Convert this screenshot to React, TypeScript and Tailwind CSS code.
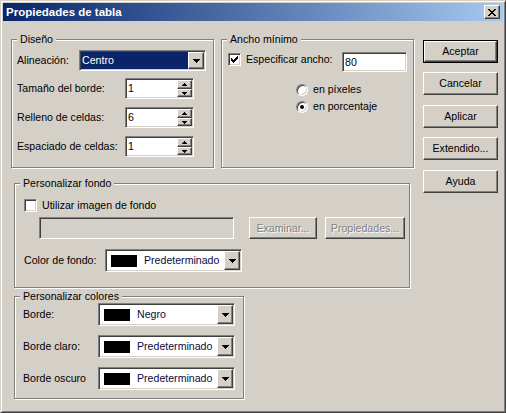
import React from "react";

const sunken =
  "border border-t-[#808080] border-l-[#808080] border-r-white border-b-white shadow-[inset_1px_1px_0_#404040,inset_-1px_-1px_0_#d4d0c8] p-px";
const raised =
  "border border-t-white border-l-white border-r-[#404040] border-b-[#404040] shadow-[inset_-1px_-1px_0_#808080] bg-[#d4d0c8]";

function Rects({ w, h, rows }: { w: number; h: number; rows: number[][] }) {
  return (
    <svg width={w} height={h} viewBox={`0 0 ${w} ${h}`} shapeRendering="crispEdges">
      {rows.map(([x, y, rw], i) => (
        <rect key={i} x={x} y={y} width={rw} height={1} fill="#000" />
      ))}
    </svg>
  );
}

const comboArrow = [
  [0, 0, 7],
  [1, 1, 5],
  [2, 2, 3],
  [3, 3, 1],
];
const spinUp = [
  [2, 0, 1],
  [1, 1, 3],
  [0, 2, 5],
];
const spinDown = [
  [0, 0, 5],
  [1, 1, 3],
  [2, 2, 1],
];
const checkMark = [
  [6, 0, 1],
  [5, 1, 2],
  [0, 2, 1],
  [4, 2, 3],
  [0, 3, 2],
  [3, 3, 3],
  [0, 4, 5],
  [1, 5, 3],
  [2, 6, 1],
];
const closeX = [
  [0, 0, 2], [6, 0, 2],
  [1, 1, 2], [5, 1, 2],
  [2, 2, 4],
  [3, 3, 2],
  [2, 4, 4],
  [1, 5, 2], [5, 5, 2],
  [0, 6, 2], [6, 6, 2],
];

function Group({
  title,
  className,
  children,
}: {
  title: string;
  className: string;
  children: React.ReactNode;
}) {
  return (
    <div
      className={`relative border border-[#808080] shadow-[inset_1px_1px_0_#fff,1px_1px_0_#fff] ${className}`}
    >
      <span className="absolute -top-[7px] left-[5px] px-[3px] bg-[#d4d0c8] leading-[13px]">
        {title}
      </span>
      {children}
    </div>
  );
}

function Check({ checked }: { checked?: boolean }) {
  return (
    <div className={`w-[13px] h-[13px] shrink-0 bg-white flex items-center justify-center ${sunken}`}>
      {checked && <Rects w={7} h={7} rows={checkMark} />}
    </div>
  );
}

function Radio({ checked }: { checked?: boolean }) {
  return (
    <div className="w-[12px] h-[12px] shrink-0 rounded-full bg-white border border-t-[#808080] border-l-[#808080] border-r-white border-b-white shadow-[inset_1px_1px_0_#404040,inset_-1px_-1px_0_#d4d0c8] flex items-center justify-center">
      {checked && <div className="w-[4px] h-[4px] rounded-full bg-black" />}
    </div>
  );
}

function Btn({
  label,
  w,
  h = 23,
  def,
  disabled,
  className = "",
}: {
  label: string;
  w: number;
  h?: number;
  def?: boolean;
  disabled?: boolean;
  className?: string;
}) {
  const text = disabled ? "text-[#808080] [text-shadow:1px_1px_0_#fff]" : "";
  return (
    <div
      className={`flex shrink-0 ${def ? "border border-black" : ""} ${className}`}
      style={{ width: w, height: h }}
    >
      <div className={`flex-1 flex items-center justify-center ${raised} ${text}`}>{label}</div>
    </div>
  );
}

function ArrowButton() {
  return (
    <div className={`w-[16px] h-full shrink-0 flex items-center justify-center ${raised}`}>
      <Rects w={7} h={4} rows={comboArrow} />
    </div>
  );
}

function Spinner({ value }: { value: string }) {
  return (
    <div className={`w-[69px] h-[21px] bg-white flex ${sunken}`}>
      <div className="flex-1 flex items-center pl-[1px]">{value}</div>
      <div className="w-[15px] flex flex-col">
        <div className={`h-[9px] flex items-center justify-center ${raised}`}>
          <Rects w={5} h={3} rows={spinUp} />
        </div>
        <div className={`h-[8px] flex items-center justify-center ${raised}`}>
          <Rects w={5} h={3} rows={spinDown} />
        </div>
      </div>
    </div>
  );
}

function ColorCombo({ label }: { label: string }) {
  return (
    <div className={`w-[137px] h-[23px] bg-white flex items-center ${sunken}`}>
      <div className="ml-[4px] w-[26px] h-[12px] bg-black shrink-0" />
      <span className="ml-[7px] text-[#0b0b40]">{label}</span>
      <div className="ml-auto h-full">
        <ArrowButton />
      </div>
    </div>
  );
}

export default function App() {
  return (
    <div className="w-[506px] h-[413px] bg-[#d4d0c8] border border-t-[#d4d0c8] border-l-[#d4d0c8] border-r-[#404040] border-b-[#404040] shadow-[inset_1px_1px_0_#fff,inset_-1px_-1px_0_#808080] p-[2px] font-['Liberation_Sans',Arial,sans-serif] text-[10.6px] leading-[13px] text-black">
      {/* title bar */}
      <div className="h-[18px] flex items-center justify-between bg-linear-to-r from-[#0a246a] to-[#a6caf0] pl-[3px] pr-[3px]">
        <span className="text-white font-bold text-[11.5px]">Propiedades de tabla</span>
        <div className={`w-[16px] h-[14px] flex items-center justify-center ${raised}`}>
          <Rects w={8} h={7} rows={closeX} />
        </div>
      </div>

      <div className="flex pl-[8px] pt-[18px]">
        <div className="flex flex-col">
          <div className="flex gap-[7px]">
            <Group title="Diseño" className="w-[203px] h-[129px]">
              <div className="flex flex-col pt-[10px] pl-[5px]">
                <div className="flex items-center h-[21px]">
                  <span className="w-[62px]">Alineación:</span>
                  <div className={`w-[127px] h-[21px] bg-white flex ${sunken}`}>
                    <div className="flex-1 flex items-center bg-[#0a246a] text-white pl-[1px]">
                      Centro
                    </div>
                    <ArrowButton />
                  </div>
                </div>
                <div className="flex flex-col gap-[8px] mt-[7px]">
                  {[
                    ["Tamaño del borde:", "1"],
                    ["Relleno de celdas:", "6"],
                    ["Espaciado de celdas:", "1"],
                  ].map(([l, v]) => (
                    <div key={l} className="flex items-center h-[21px]">
                      <span className="w-[108px]">{l}</span>
                      <Spinner value={v} />
                    </div>
                  ))}
                </div>
              </div>
            </Group>

            <Group title="Ancho mínimo" className="w-[193px] h-[129px]">
              <div className="pl-[6px] pt-[12px]">
                <div className="flex items-start">
                  <div className="mt-[1px]">
                    <Check checked />
                  </div>
                  <span className="ml-[5px] w-[96px] mt-[1px]">Especificar ancho:</span>
                  <div className={`w-[65px] h-[20px] bg-white flex items-center pl-[2px] ${sunken}`}>
                    80
                  </div>
                </div>
                <div className="ml-[68px] mt-[11px] flex flex-col gap-[4px]">
                  <div className="flex items-center h-[13px] gap-[5px]">
                    <Radio />
                    <span>en píxeles</span>
                  </div>
                  <div className="flex items-center h-[13px] gap-[5px]">
                    <Radio checked />
                    <span>en porcentaje</span>
                  </div>
                </div>
              </div>
            </Group>
          </div>

          <Group title="Personalizar fondo" className="ml-[3px] mt-[15px] w-[396px] h-[105px]">
            <div className="pl-[9px] pt-[15px]">
              <div className="flex items-center h-[13px] gap-[5px]">
                <Check />
                <span>Utilizar imagen de fondo</span>
              </div>
              <div className="flex mt-[5px]">
                <div className={`ml-[15px] w-[195px] h-[22px] bg-[#d4d0c8] ${sunken}`} />
                <Btn label="Examinar..." w={68} h={22} disabled className="ml-[15px]" />
                <Btn label="Propiedades..." w={80} h={22} disabled className="ml-[8px]" />
              </div>
              <div className="flex items-center mt-[10px]">
                <span className="w-[81px]">Color de fondo:</span>
                <ColorCombo label="Predeterminado" />
              </div>
            </div>
          </Group>

          <Group title="Personalizar colores" className="ml-[3px] mt-[8px] w-[230px] h-[103px]">
            <div className="pl-[8px] pt-[6px] flex flex-col gap-[9px]">
              {[
                ["Borde:", "Negro"],
                ["Borde claro:", "Predeterminado"],
                ["Borde oscuro", "Predeterminado"],
              ].map(([l, v]) => (
                <div key={l} className="flex items-center">
                  <span className="w-[75px]">{l}</span>
                  <ColorCombo label={v} />
                </div>
              ))}
            </div>
          </Group>
        </div>

        <div className="ml-[9px] mt-[1px] flex flex-col w-[75px]">
          <Btn label="Aceptar" w={75} def />
          <Btn label="Cancelar" w={75} className="mt-[9px]" />
          <Btn label="Aplicar" w={75} className="mt-[10px]" />
          <Btn label="Extendido..." w={75} className="mt-[9px]" />
          <Btn label="Ayuda" w={75} className="mt-[10px]" />
        </div>
      </div>
    </div>
  );
}
